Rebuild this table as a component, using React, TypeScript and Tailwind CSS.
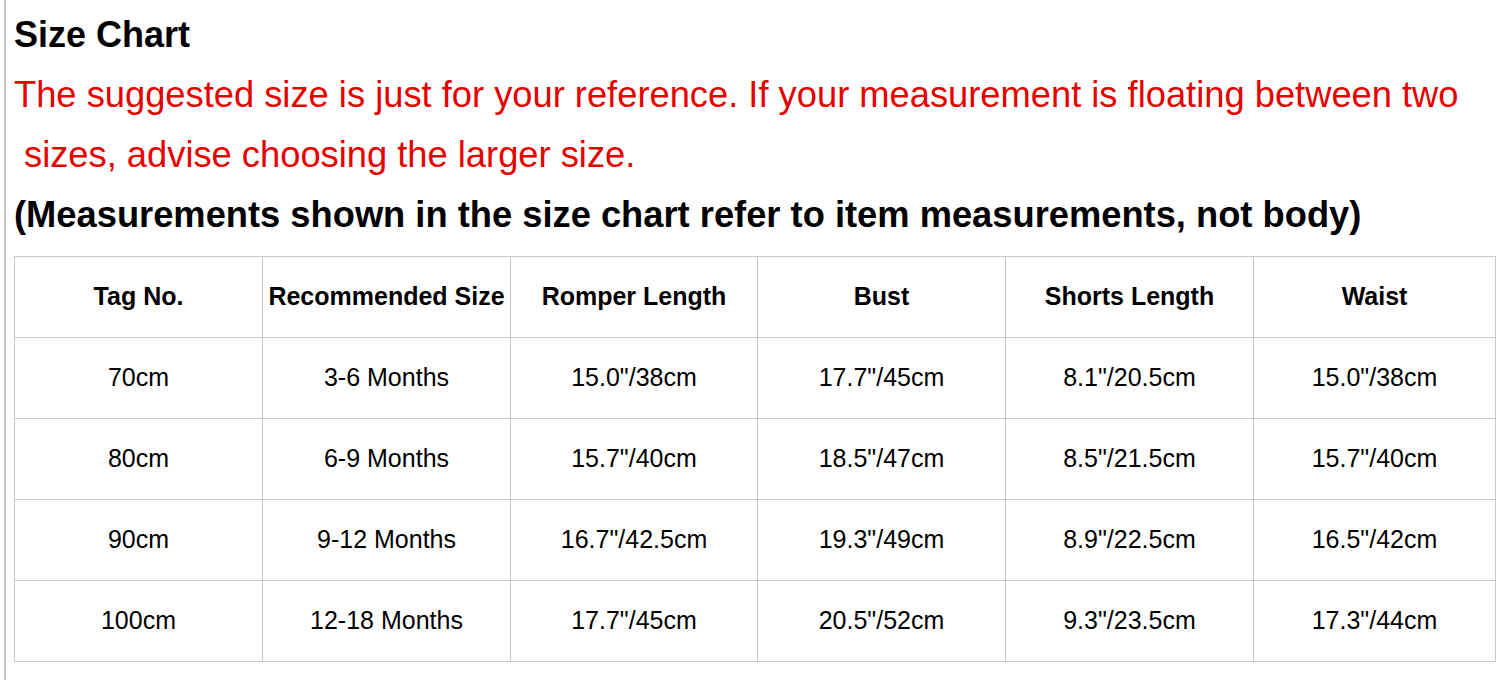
import React from "react";

const rows = [
  ["70cm", "3-6 Months", "15.0\"/38cm", "17.7\"/45cm", "8.1\"/20.5cm", "15.0\"/38cm"],
  ["80cm", "6-9 Months", "15.7\"/40cm", "18.5\"/47cm", "8.5\"/21.5cm", "15.7\"/40cm"],
  ["90cm", "9-12 Months", "16.7\"/42.5cm", "19.3\"/49cm", "8.9\"/22.5cm", "16.5\"/42cm"],
  ["100cm", "12-18 Months", "17.7\"/45cm", "20.5\"/52cm", "9.3\"/23.5cm", "17.3\"/44cm"]
];

const headers = ["Tag No.", "Recommended Size", "Romper Length", "Bust", "Shorts Length", "Waist"];

export default function App() {
  return (
    <div className="h-[680px] bg-white pl-[4px] font-['Liberation_Sans',Arial,sans-serif] text-black">
      <div className="h-full border-l-2 border-[#c4c4c4] pl-[8px] pt-[5px]">
        <h1 className="text-[36px] font-bold leading-[60px]">Size Chart</h1>
        <p className="text-[36.3px] leading-[60px] text-[#e60000]">
          The suggested size is just for your reference. If your measurement is floating between two
        </p>
        <p className="pl-[10px] text-[36.3px] leading-[60px] text-[#e60000]">
          sizes, advise choosing the larger size.
        </p>
        <p className="text-[36.3px] font-bold leading-[60px]">
          (Measurements shown in the size chart refer to item measurements, not body)
        </p>

        {/* tabela */}
        <div className="mt-[11px] w-[1482px] border border-[#c8c8c8]">
          <div className="grid grid-cols-[248px_248px_247px_248px_248px_1fr]">
            {headers.map((h, i) => (
              <div
                key={h}
                className={`flex h-[80px] items-center justify-center text-[25px] font-bold ${
                  i < 5 ? "border-r border-[#c8c8c8]" : ""
                }`}
              >
                {h}
              </div>
            ))}
          </div>
          {rows.map((r, ri) => (
            <div key={ri} className="grid grid-cols-[248px_248px_247px_248px_248px_1fr] border-t border-[#c8c8c8]">
              {r.map((c, i) => (
                <div
                  key={i}
                  className={`flex h-[80px] items-center justify-center text-[25px] ${
                    i < 5 ? "border-r border-[#c8c8c8]" : ""
                  }`}
                >
                  {c}
                </div>
              ))}
            </div>
          ))}
        </div>
      </div>
    </div>
  );
}
